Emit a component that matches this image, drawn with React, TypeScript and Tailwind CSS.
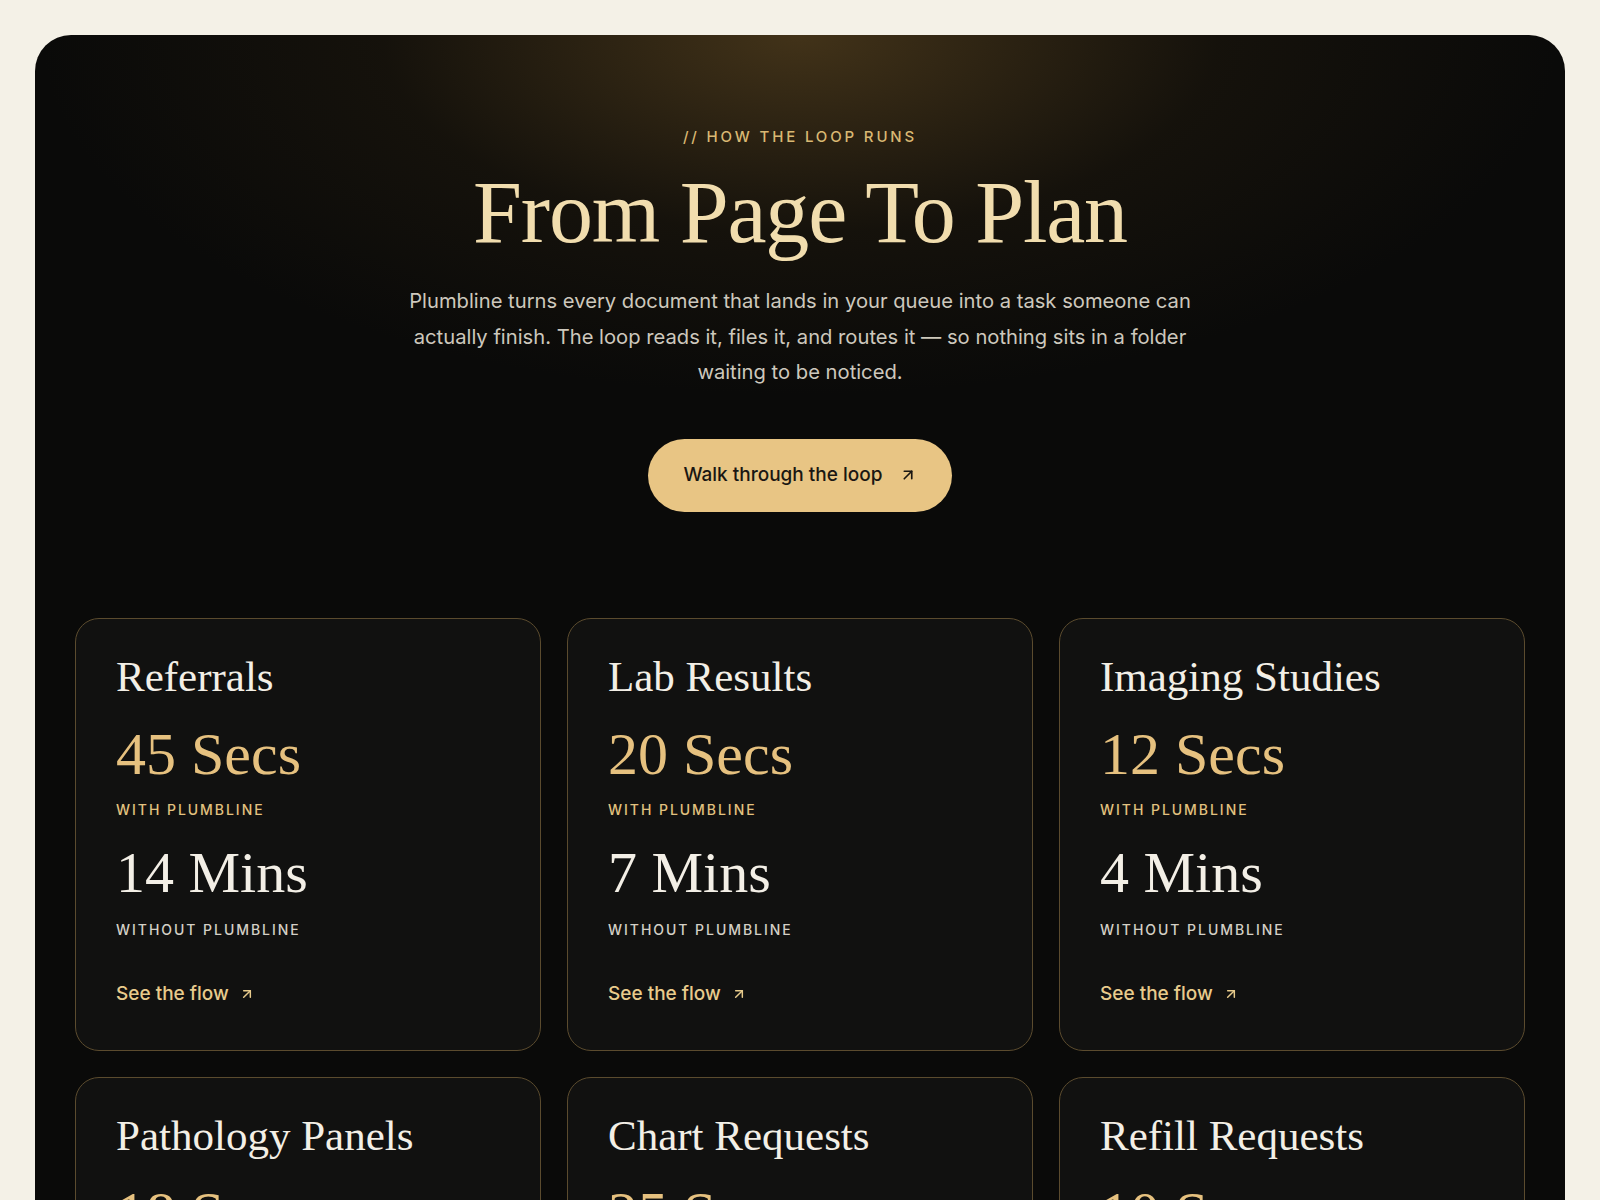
import { ArrowUpRight } from 'lucide-react';

type Flow = {
  name: string;
  withTime: string;
  withoutTime: string;
};

const flows: Flow[] = [
  { name: 'Referrals', withTime: '45 Secs', withoutTime: '14 Mins' },
  { name: 'Lab Results', withTime: '20 Secs', withoutTime: '7 Mins' },
  { name: 'Imaging Studies', withTime: '12 Secs', withoutTime: '4 Mins' },
  { name: 'Pathology Panels', withTime: '18 Secs', withoutTime: '9 Mins' },
  { name: 'Chart Requests', withTime: '25 Secs', withoutTime: '11 Mins' },
  { name: 'Refill Requests', withTime: '10 Secs', withoutTime: '6 Mins' },
];

const serif = "font-['Liberation_Serif',_'Times_New_Roman',_serif]";
const sans = "font-['Inter',_'Liberation_Sans',_sans-serif]";

function FlowCard({ flow }: { flow: Flow }) {
  return (
    <div className="rounded-[24px] border border-[#5b4b2e] bg-[#111110] px-10 pt-[34px] pb-[42px]">
      <h3 className={`${serif} text-[43px] leading-[48px] text-[#f3efe6]`}>{flow.name}</h3>
      <div className={`${serif} mt-[21px] text-[60px] leading-[64px] text-[#e6c17f]`}>
        {flow.withTime}
      </div>
      <div className={`${sans} mt-[14px] text-[14px] leading-[20px] font-medium tracking-[0.14em] text-[#e2c27f] uppercase`}>
        With Plumbline
      </div>
      <div className={`${serif} mt-[21px] text-[58px] leading-[64px] text-[#f3efe6]`}>
        {flow.withoutTime}
      </div>
      <div className={`${sans} mt-[15px] text-[14px] leading-[20px] font-medium tracking-[0.14em] text-[#d4d0c6] uppercase`}>
        Without Plumbline
      </div>
      <a
        href="#"
        className={`${sans} mt-[40px] inline-flex items-center gap-[10px] text-[19px] leading-[28px] font-medium text-[#e8cb8c]`}
      >
        See the flow
        <ArrowUpRight size={16} strokeWidth={2.2} />
      </a>
    </div>
  );
}

export default function App() {
  return (
    <main className="min-h-screen bg-[#f4f1e7] p-[35px]">
      <section className="rounded-[36px] bg-[#0a0a09] bg-[radial-gradient(ellipse_760px_360px_at_50%_0%,rgba(112,84,38,0.55),rgba(60,45,20,0.22)_55%,transparent_100%)] px-10 pt-[92px] pb-16">
        <div className="flex flex-col items-center text-center">
          <p className={`${sans} text-[15px] leading-[20px] font-medium tracking-[0.19em] text-[#d9b873] uppercase`}>
            // How the loop runs
          </p>
          <h2 className={`${serif} mt-[18px] text-[88px] leading-[96px] tracking-[-1.2px] text-[#f1ddae]`}>
            From Page To Plan
          </h2>
          <p className={`${sans} mt-[22px] max-w-[810px] text-[20.2px] leading-[35.5px] text-[#cdc8bd]`}>
            Plumbline turns every document that lands in your queue into a task someone can
            actually finish. The loop reads it, files it, and routes it — so nothing sits in a folder
            waiting to be noticed.
          </p>
          <a
            href="#"
            className={`${sans} mt-[49px] inline-flex h-[73px] w-[304px] items-center justify-center gap-4 rounded-full bg-[#e8c584] text-[19px] font-medium text-[#1a1712]`}
          >
            Walk through the loop
            <ArrowUpRight size={18} strokeWidth={2.2} />
          </a>
        </div>

        <div className="mt-[106px] grid grid-cols-3 gap-[26px]">
          {flows.map((flow) => (
            <FlowCard key={flow.name} flow={flow} />
          ))}
        </div>
      </section>
    </main>
  );
}
